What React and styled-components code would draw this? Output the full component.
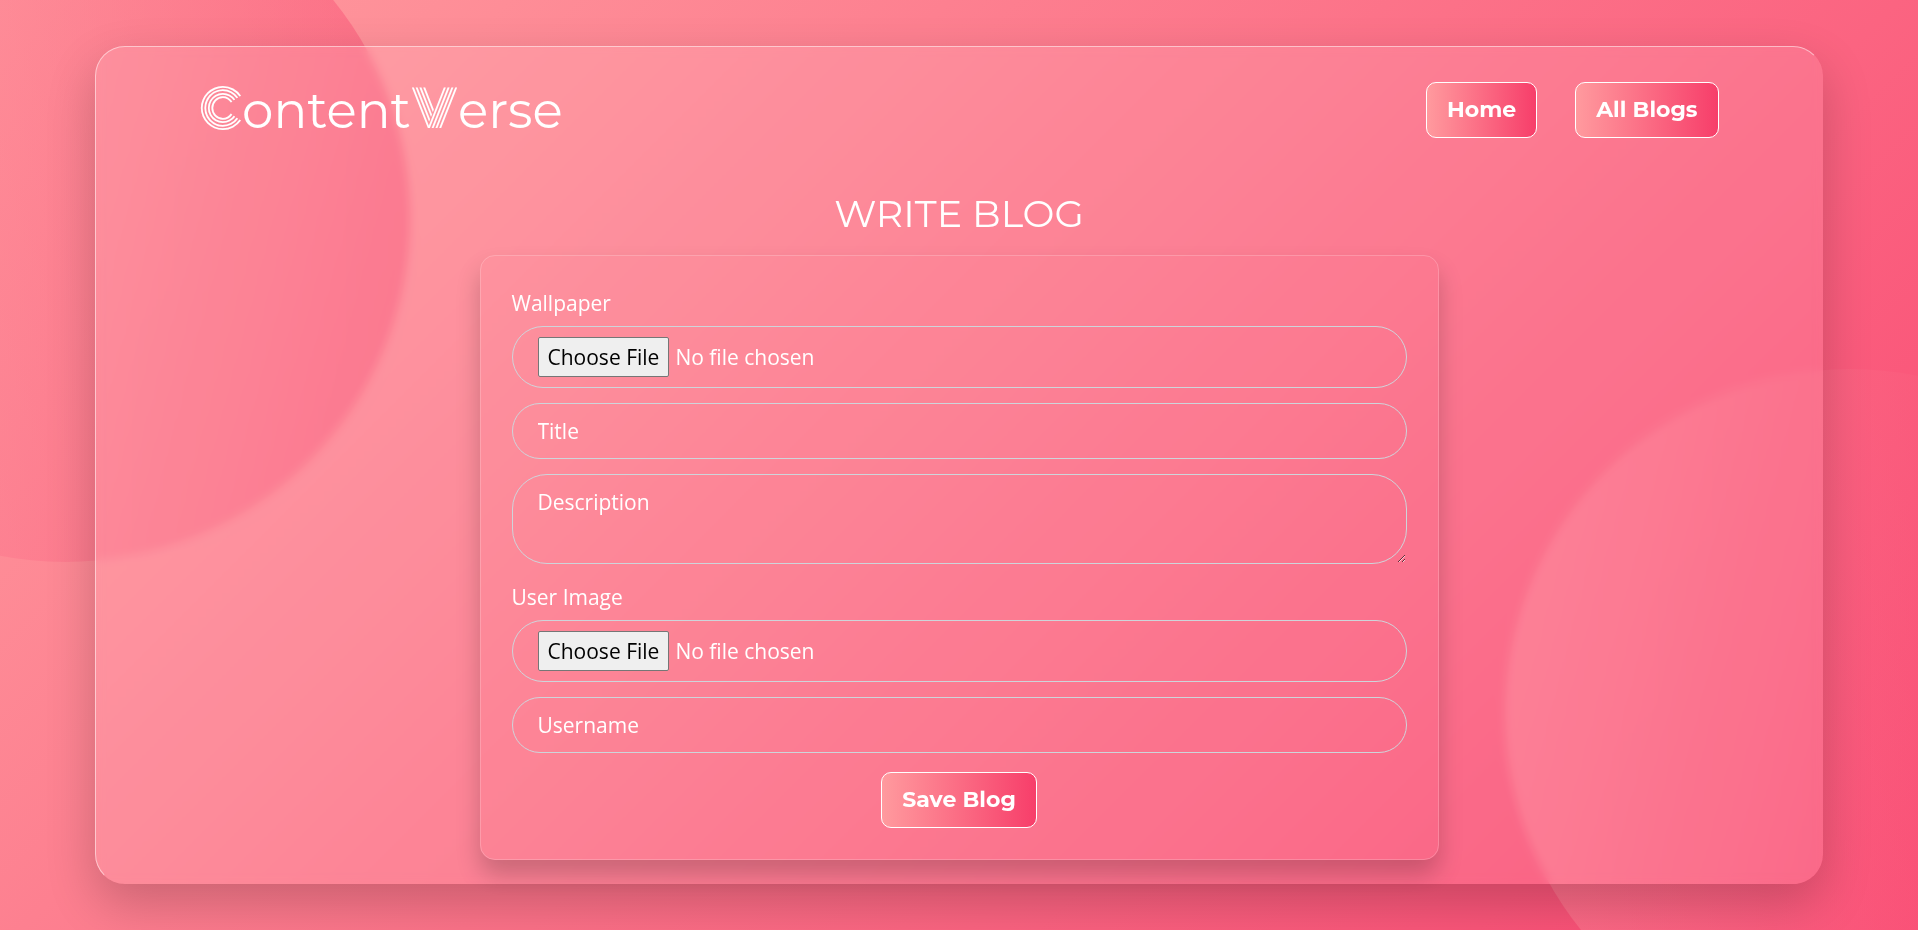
import React from "react";
import styled, { createGlobalStyle, css } from "styled-components";

const display = `Montserrat, Inter, "Liberation Sans", sans-serif`;
const body = `"Segoe UI", "Open Sans", "Noto Sans", sans-serif`;
const warm = "#ff9a9e";
const rose = "#f73e6a";

const GlobalStyle = createGlobalStyle`
  *, *::before, *::after { box-sizing: border-box; }
  body { margin: 0; color: #fff; font-family: ${body}; }
`;

const Page = styled.div`
  position: relative;
  display: flex;
  align-items: center;
  justify-content: center;
  min-height: 100vh;
  overflow: hidden;
  background: linear-gradient(135deg, #ff9c9f, #f94872);
`;

const Orb = styled.div`
  position: absolute;
  width: 36vw;
  aspect-ratio: 1;
  border-radius: 50%;
  opacity: 0.4;
  background: linear-gradient(to right, #ff94a0, ${rose});
  ${({ $corner }) =>
    $corner === "start"
      ? css`
          top: -128px;
          left: -280px;
        `
      : css`
          right: -277px;
          bottom: -129px;
        `}
`;

const Panel = styled.div`
  position: relative;
  width: calc(90% + 2px);
  min-height: 90vh;
  padding-top: 34px;
  padding-bottom: 23px;
  border: 1px solid transparent;
  border-top-color: rgba(255, 255, 255, 0.5);
  border-left-color: rgba(255, 255, 255, 0.5);
  border-radius: 30px;
  background: rgba(255, 255, 255, 0.1);
  box-shadow: 0 20px 50px rgba(0, 0, 0, 0.2);
  backdrop-filter: blur(5px);
`;

const Header = styled.header`
  display: flex;
  align-items: center;
  justify-content: space-between;
  padding: 0 6%;
`;

const Brand = styled.a`
  color: #fff;
  font: 400 50px/56px ${display};
  text-decoration: none;
`;

const Initial = styled.span`
  font-family: Monoton, ${display};
`;

const Nav = styled.nav`
  display: flex;
  gap: 38px;
`;

const buttonLook = css`
  padding: 14px 20px;
  border: 1px solid #fff;
  border-radius: 10px;
  background: linear-gradient(to right, ${warm}, ${rose});
  color: #fff;
  font: 700 22px/26px ${display};
  text-decoration: none;
  cursor: pointer;
`;

const NavLink = styled.a`
  ${buttonLook}
`;

const SaveButton = styled.button`
  ${buttonLook}
  align-self: center;
  margin-top: 4px;
`;

const Heading = styled.h1`
  margin: 55px 0 21px;
  font: 400 38px/40px ${display};
  text-align: center;
  text-transform: uppercase;
`;

const Form = styled.form`
  display: flex;
  flex-direction: column;
  gap: 15px;
  width: 50vw;
  margin: 0 auto;
  padding: 29px 31px 31px;
  border: 1px solid rgba(255, 255, 255, 0.2);
  border-radius: 15px;
  box-shadow: 0 15px 25px rgba(0, 0, 0, 0.2);
`;

const Field = styled.div`
  display: flex;
  flex-direction: column;
  gap: 5px;
`;

const Label = styled.label`
  font: 500 21px/36px ${body};
`;

const fieldLook = css`
  width: 100%;
  margin: 0;
  padding: 12px 25px;
  border: 1px solid #ced4da;
  border-radius: 35px;
  outline: none;
  background: transparent;
  color: #fff;
  font: 500 21px/30px ${body};

  &::placeholder {
    color: #fff;
    opacity: 1;
  }
`;

const TextInput = styled.input`
  ${fieldLook}
  height: 56px;
`;

const TextArea = styled.textarea`
  ${fieldLook}
  display: block;
  height: 90px;
`;

const FileInput = styled.input`
  ${fieldLook}
  height: 62px;
  padding: 10px 25px;

  &::file-selector-button {
    height: 40px;
    margin-right: 6px;
    padding: 0 9px;
    border: 1px solid #767676;
    border-radius: 2px;
    background: #efefef;
    color: #000;
    font: 400 21px/38px ${body};
  }
`;

export default function App() {
  return (
    <Page>
      <GlobalStyle />
      <Orb $corner="start" />
      <Orb $corner="end" />
      <Panel>
        <Header>
          <Brand href="#">
            <Initial>C</Initial>ontent<Initial>V</Initial>erse
          </Brand>
          <Nav>
            <NavLink href="#home">Home</NavLink>
            <NavLink href="#blogs">All Blogs</NavLink>
          </Nav>
        </Header>
        <main>
          <Heading>Write Blog</Heading>
          <Form onSubmit={(event) => event.preventDefault()}>
            <Field>
              <Label htmlFor="wallpaper">Wallpaper</Label>
              <FileInput id="wallpaper" type="file" />
            </Field>
            <TextInput type="text" placeholder="Title" aria-label="Title" />
            <TextArea placeholder="Description" aria-label="Description" />
            <Field>
              <Label htmlFor="user-image">User Image</Label>
              <FileInput id="user-image" type="file" />
            </Field>
            <TextInput type="text" placeholder="Username" aria-label="Username" />
            <SaveButton type="submit">Save Blog</SaveButton>
          </Form>
        </main>
      </Panel>
    </Page>
  );
}
